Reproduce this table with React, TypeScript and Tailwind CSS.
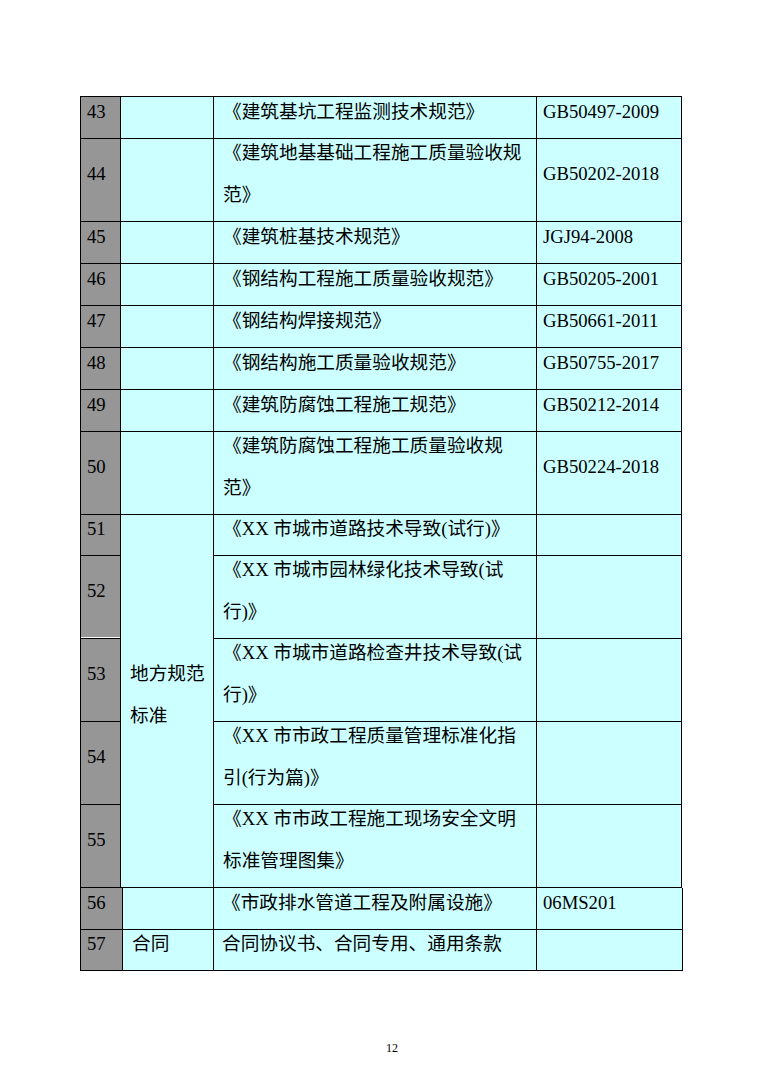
import React from 'react';

type Row = { no: number; name: string; title: string[]; code: string; h: string };

const TOP_ROWS: Row[] = [
  { no: 43, name: '', title: ['《建筑基坑工程监测技术规范》'], code: 'GB50497-2009', h: 'h-[42px]' },
  { no: 44, name: '', title: ['《建筑地基基础工程施工质量验收规', '范》'], code: 'GB50202-2018', h: 'h-[83px]' },
  { no: 45, name: '', title: ['《建筑桩基技术规范》'], code: 'JGJ94-2008', h: 'h-[42px]' },
  { no: 46, name: '', title: ['《钢结构工程施工质量验收规范》'], code: 'GB50205-2001', h: 'h-[42px]' },
  { no: 47, name: '', title: ['《钢结构焊接规范》'], code: 'GB50661-2011', h: 'h-[42px]' },
  { no: 48, name: '', title: ['《钢结构施工质量验收规范》'], code: 'GB50755-2017', h: 'h-[42px]' },
  { no: 49, name: '', title: ['《建筑防腐蚀工程施工规范》'], code: 'GB50212-2014', h: 'h-[42px]' },
  { no: 50, name: '', title: ['《建筑防腐蚀工程施工质量验收规', '范》'], code: 'GB50224-2018', h: 'h-[83px]' },
];

const LOCAL_ROWS: Row[] = [
  { no: 51, name: '', title: ['《XX 市城市道路技术导致(试行)》'], code: '', h: 'h-[41px]' },
  { no: 52, name: '', title: ['《XX 市城市园林绿化技术导致(试', '行)》'], code: '', h: 'h-[83px]' },
  { no: 53, name: '', title: ['《XX 市城市道路检查井技术导致(试', '行)》'], code: '', h: 'h-[83px]' },
  { no: 54, name: '', title: ['《XX 市市政工程质量管理标准化指', '引(行为篇)》'], code: '', h: 'h-[83px]' },
  { no: 55, name: '', title: ['《XX 市市政工程施工现场安全文明', '标准管理图集》'], code: '', h: 'h-[83px]' },
];

const BOTTOM_ROWS: Row[] = [
  { no: 56, name: '', title: ['《市政排水管道工程及附属设施》'], code: '06MS201', h: 'h-[42px]' },
  { no: 57, name: '合同', title: ['合同协议书、合同专用、通用条款'], code: '', h: 'h-[41px]' },
];

function Lines({ lines }: { lines: string[] }) {
  return (
    <div className="-translate-y-[6px] leading-[42px] whitespace-nowrap">
      {lines.map((l, i) => (
        <div key={i}>{l}</div>
      ))}
    </div>
  );
}

function NoCell({ no, h, w, extra = '' }: { no: number; h: string; w: string; extra?: string }) {
  return (
    <div className={`${w} ${h} shrink-0 flex items-center pl-[6px] bg-[#969696] border-l border-b border-black ${extra}`}>
      <Lines lines={[String(no)]} />
    </div>
  );
}

function TextCell({ lines, h, w, pl, extra = '' }: { lines: string[]; h: string; w: string; pl: string; extra?: string }) {
  return (
    <div className={`${w} ${h} shrink-0 flex items-center ${pl} bg-[#ccffff] border-l border-b border-black ${extra}`}>
      <Lines lines={lines} />
    </div>
  );
}

export default function App() {
  return (
    <div
      className="w-[761px] min-h-[1077px] bg-white text-black pt-[96px] text-[18.67px]"
      style={{ fontFamily: '"Liberation Serif", "Noto Sans CJK SC", serif' }}
    >
      <div className="ml-[80px] w-[602px] border-t border-black">
        {/* rows 43 - 50 */}
        {TOP_ROWS.map((r) => (
          <div key={r.no} className="flex">
            <NoCell no={r.no} h={r.h} w="w-[40px]" />
            <TextCell lines={[r.name]} h={r.h} w="w-[93px]" pl="pl-[9px]" />
            <TextCell lines={r.title} h={r.h} w="w-[323px]" pl="pl-[9px]" />
            <TextCell lines={[r.code]} h={r.h} w="w-[146px]" pl="pl-[6px]" extra="border-r" />
          </div>
        ))}

        {/* rows 51 - 55, local standards */}
        <div className="flex">
          <div className="flex flex-col">
            {LOCAL_ROWS.map((r) => (
              <NoCell
                key={r.no}
                no={r.no}
                h={r.h}
                w="w-[40px]"
                extra={r.no === 52 ? 'shadow-[inset_0_-1px_0_#ffffff]' : ''}
              />
            ))}
          </div>
          <TextCell lines={['地方规范', '标准']} h="h-[373px]" w="w-[93px]" pl="pl-[9px]" />
          <div className="flex flex-col">
            {LOCAL_ROWS.map((r) => (
              <div key={r.no} className="flex">
                <TextCell lines={r.title} h={r.h} w="w-[323px]" pl="pl-[9px]" />
                <TextCell lines={[r.code]} h={r.h} w="w-[146px]" pl="pl-[6px]" extra="border-r" />
              </div>
            ))}
          </div>
        </div>

        {/* rows 56 - 57 */}
        {BOTTOM_ROWS.map((r) => (
          <div key={r.no} className="flex">
            <NoCell no={r.no} h={r.h} w="w-[42px]" />
            <TextCell lines={[r.name]} h={r.h} w="w-[91px]" pl="pl-[9px]" />
            <TextCell lines={r.title} h={r.h} w="w-[323px]" pl="pl-[8px]" />
            <TextCell lines={[r.code]} h={r.h} w="w-[147px]" pl="pl-[6px]" extra="border-r" />
          </div>
        ))}
      </div>

      <div className="mt-[70px] pl-[23px] text-center text-[12px] leading-[14px]">12</div>
    </div>
  );
}
